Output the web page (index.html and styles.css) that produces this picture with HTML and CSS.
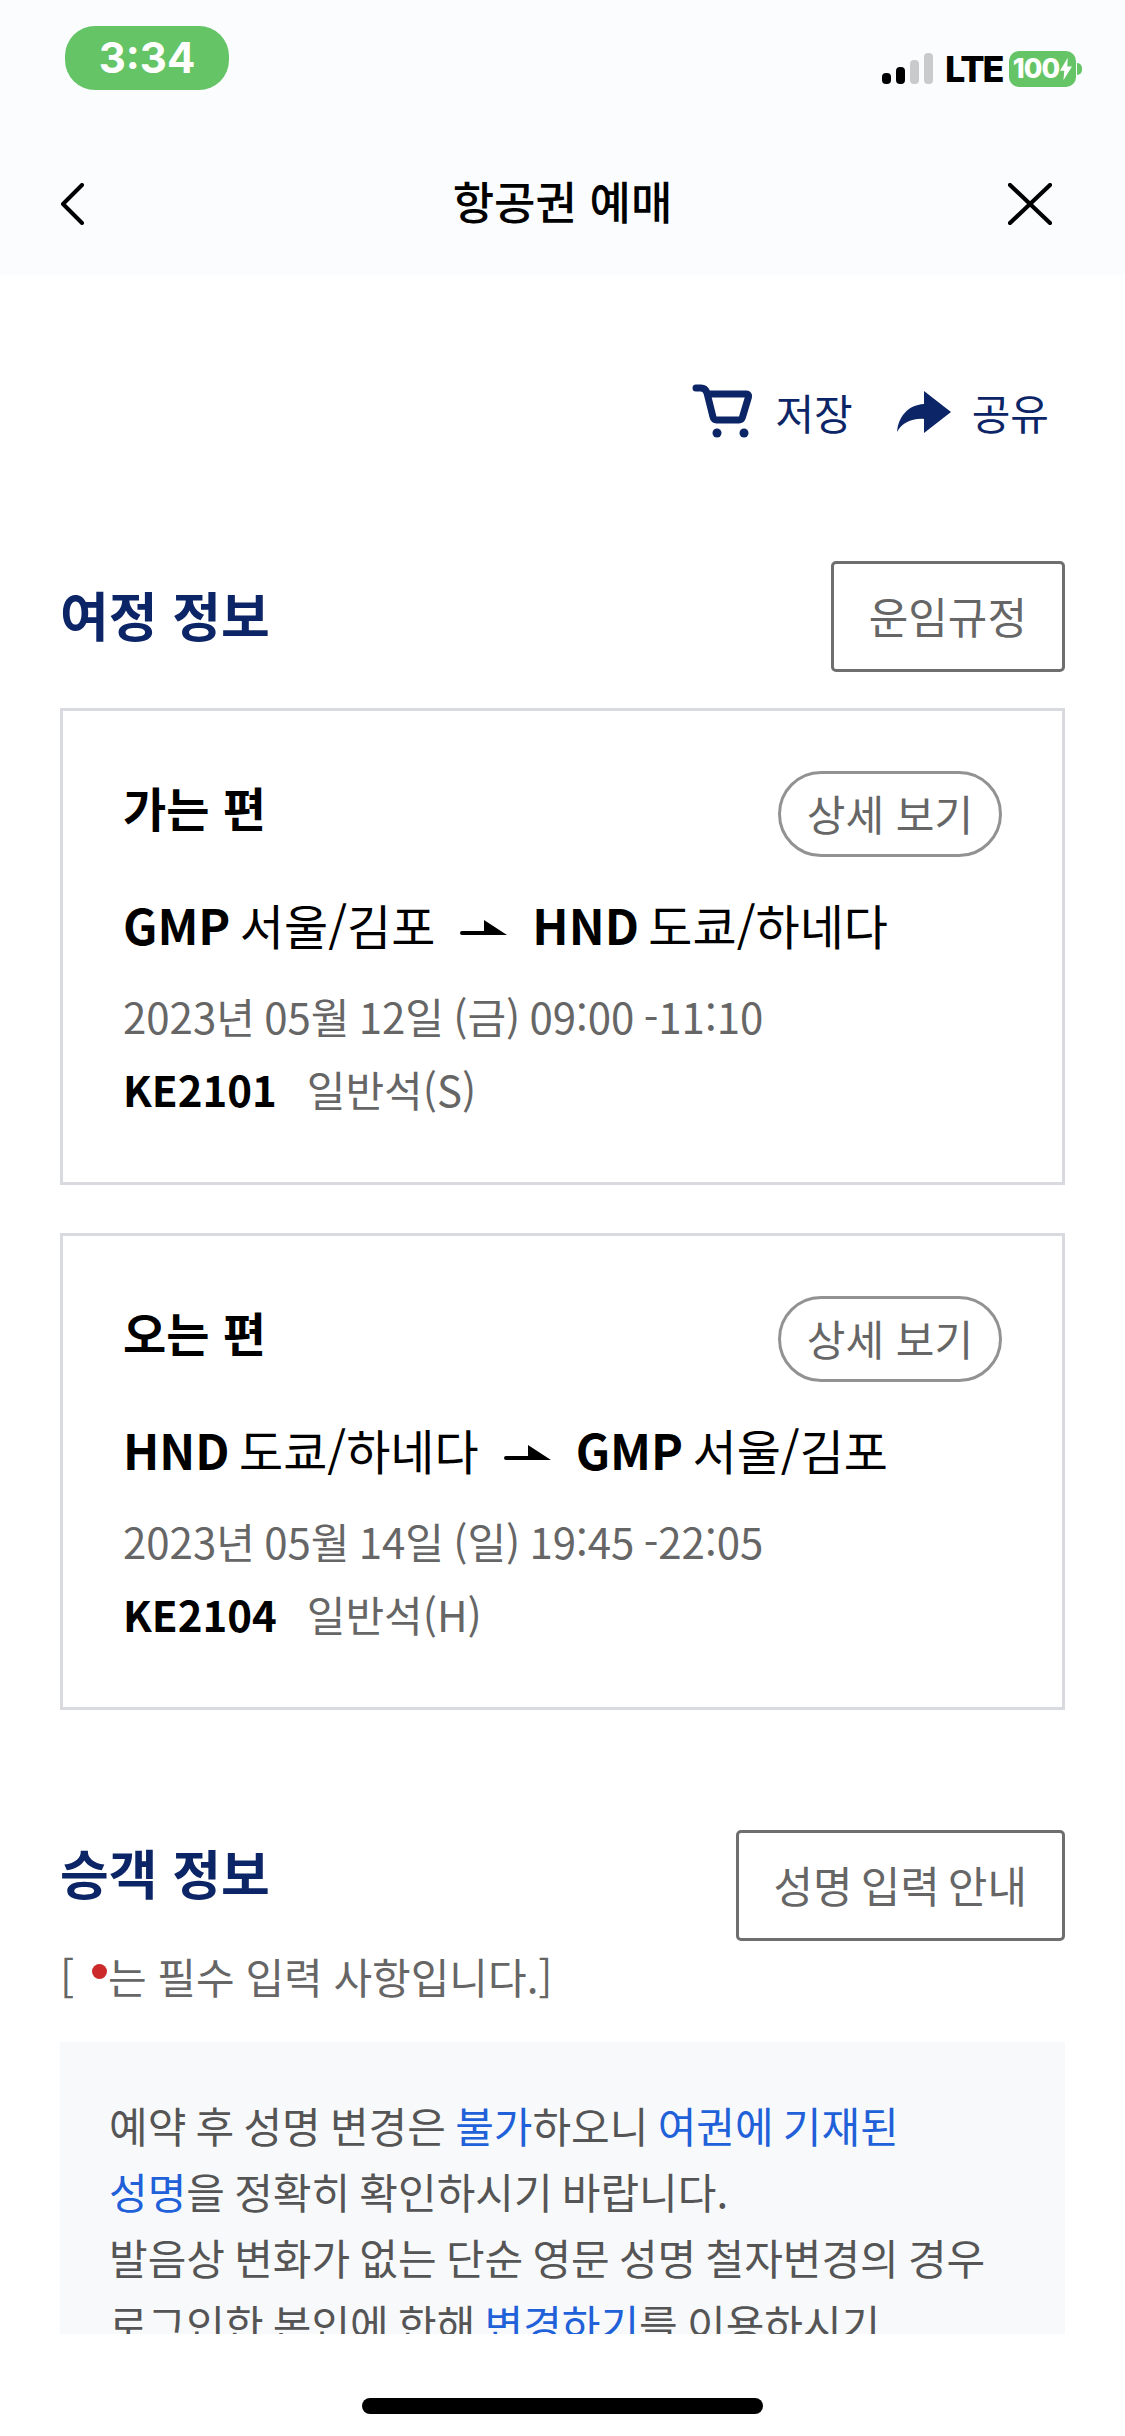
FILE: index.html
```html
<!DOCTYPE html>
<html lang="ko">
<head>
  <meta charset="utf-8">
  <meta name="viewport" content="width=device-width, initial-scale=1">
  <title>항공권 예매</title>
  <link rel="stylesheet" href="styles.css">
</head>
<body>
  <header class="top">
    <div class="status">
      <span class="time">3:34</span>
      <div class="indicators">
        <div class="signal">
          <i class="bar bar1"></i>
          <i class="bar bar2"></i>
          <i class="bar bar3 off"></i>
          <i class="bar bar4 off"></i>
        </div>
        <span class="lte">LTE</span>
        <div class="battery">
          <span class="level">100</span>
          <svg class="bolt" viewBox="0 0 14 26" width="12" height="24"><path d="M9 0 0 15h5l-1 11 10-16H8.500z" fill="#fff"/></svg>
        </div>
        <i class="battery-tip"></i>
      </div>
    </div>
    <nav class="nav">
      <svg class="nav-back" viewBox="0 0 26 42" width="26" height="42"><path d="M23 2 4 21l19 19" fill="none" stroke="#000" stroke-width="4" stroke-linecap="round" stroke-linejoin="round"/></svg>
      <h1>항공권 예매</h1>
      <svg class="nav-close" viewBox="0 0 44 42" width="44" height="42"><path d="M2 2l40 38M42 2 2 40" fill="none" stroke="#000" stroke-width="4.200" stroke-linecap="round"/></svg>
    </nav>
  </header>

  <main class="content">
    <div class="actions">
      <a class="action">
        <svg viewBox="0 0 62 56" width="62" height="56">
          <path d="M4 4h5c3 0 5 2 6 5l6 24c.5 2 1.500 3 3.500 3H47c2 0 3-1 3.500-3l6-20c.5-2-.5-3-2-3H16" fill="none" stroke="#0c2566" stroke-width="7" stroke-linecap="round" stroke-linejoin="round"/>
          <circle cx="25" cy="49" r="4.500" fill="#0c2566"/>
          <circle cx="52" cy="49" r="4.500" fill="#0c2566"/>
        </svg>
        저장
      </a>
      <a class="action">
        <svg viewBox="0 0 54 42" width="54" height="42"><path d="M27 0 54 21 27 42V28C15 27 5 32 0 41 1 27 10 14 27 13z" fill="#0c2566"/></svg>
        공유
      </a>
    </div>

    <section class="section">
      <div class="section-head">
        <h2>여정 정보</h2>
        <button class="btn" type="button">운임규정</button>
      </div>

      <article class="card">
        <div class="card-head">
          <h3>가는 편</h3>
          <button class="pill" type="button">상세 보기</button>
        </div>
        <p class="route">
          <span><b>GMP</b> 서울/김포</span>
          <svg class="arrow" viewBox="0 0 47 15" width="47" height="15"><path d="M24 0 47 15H2a2 2 0 0 1 0-4h22z" fill="#000"/></svg>
          <span><b>HND</b> 도쿄/하네다</span>
        </p>
        <p class="when">2023년 05월 12일 (금) 09:00 -11:10</p>
        <p class="flight"><b>KE2101</b><span>일반석(S)</span></p>
      </article>

      <article class="card">
        <div class="card-head">
          <h3>오는 편</h3>
          <button class="pill" type="button">상세 보기</button>
        </div>
        <p class="route">
          <span><b>HND</b> 도쿄/하네다</span>
          <svg class="arrow" viewBox="0 0 47 15" width="47" height="15"><path d="M24 0 47 15H2a2 2 0 0 1 0-4h22z" fill="#000"/></svg>
          <span><b>GMP</b> 서울/김포</span>
        </p>
        <p class="when">2023년 05월 14일 (일) 19:45 -22:05</p>
        <p class="flight"><b>KE2104</b><span>일반석(H)</span></p>
      </article>
    </section>

    <section class="section passenger">
      <div class="section-head">
        <h2>승객 정보</h2>
        <button class="btn" type="button">성명 입력 안내</button>
      </div>
      <p class="note">[ <i class="dot"></i>는 필수 입력 사항입니다.]</p>
      <div class="notice">
        예약 후 성명 변경은 <em>불가</em>하오니 <em>여권에 기재된</em><br>
        <em>성명</em>을 정확히 확인하시기 바랍니다.<br>
        발음상 변화가 없는 단순 영문 성명 철자변경의 경우<br>
        로그인한 본인에 한해 <em>변경하기</em>를 이용하시기
      </div>
    </section>
  </main>

  <footer class="home">
    <span class="home-bar"></span>
  </footer>
</body>
</html>
```

FILE: styles.css
```css
* {
  box-sizing: border-box;
}
html, body {
  margin: 0;
  background: #fff;
}
body {
  width: 1125px;
  height: 2436px;
  overflow: hidden;
  font-family: "Noto Sans CJK KR", "Noto Sans", sans-serif;
  color: #000;
}
h1, h2, h3, p {
  margin: 0;
}
button {
  font: inherit;
  background: #fff;
  color: #666;
  padding: 0 0 4px;
}

/* status bar + title */
.top {
  height: 275px;
  background: #fbfcfe;
}
.status {
  height: 100px;
  display: flex;
  justify-content: space-between;
  align-items: flex-start;
  padding: 26px 43px 0 65px;
}
.time {
  width: 164px;
  height: 64px;
  border-radius: 30px;
  background: #65c466;
  color: #fff;
  font: 700 42px/64px Inter, sans-serif;
  text-align: center;
}
.indicators {
  display: flex;
  align-items: flex-end;
  margin-top: 25px;
  height: 36px;
}
.signal {
  display: flex;
  align-items: flex-end;
  gap: 5px;
  margin-bottom: 3px;
}
.bar {
  display: block;
  width: 9px;
  border-radius: 4px;
  background: #000;
}
.bar.off {
  background: #c9cacc;
}
.bar1 { height: 11px; }
.bar2 { height: 17px; }
.bar3 { height: 24px; }
.bar4 { height: 31px; }
.lte {
  width: 54px;
  margin: 0 10px 0 12px;
  font: 800 36px/36px Inter, sans-serif;
  letter-spacing: -2px;
  white-space: nowrap;
}
.battery {
  width: 67px;
  height: 36px;
  border-radius: 10px;
  background: #65c466;
  display: flex;
  align-items: center;
  justify-content: center;
  gap: 1px;
  color: #fff;
}
.level {
  font: 800 27px/36px Inter, sans-serif;
  letter-spacing: -1px;
}
.battery-tip {
  width: 5px;
  height: 12px;
  margin: 0 0 12px 1px;
  background: #65c466;
  border-radius: 0 6px 6px 0;
}
.nav {
  height: 175px;
  padding: 32px 59px 0;
  display: grid;
  grid-template-columns: 1fr auto 1fr;
  align-items: center;
  align-content: start;
}
.nav h1 {
  font-size: 45px;
  font-weight: 500;
  line-height: 137px;
  padding-bottom: 6px;
}
.nav-close {
  justify-self: end;
  margin-right: 14px;
}

/* page */
.content {
  height: 2059px;
  overflow: hidden;
  padding: 109px 60px 0;
}
.actions {
  display: flex;
  justify-content: flex-end;
  gap: 44px;
  padding-right: 16px;
  height: 56px;
  align-items: center;
  font-size: 42px;
  color: #0c2566;
}
.action {
  display: flex;
  align-items: center;
  gap: 21px;
  line-height: 56px;
}
.section {
  margin-top: 121px;
}
.section-head {
  display: flex;
  justify-content: space-between;
  align-items: center;
  margin-bottom: 36px;
}
.section-head h2 {
  font-size: 53px;
  font-weight: 700;
  line-height: 72px;
  margin-bottom: 6px;
  color: #0c2566;
}
.btn {
  height: 111px;
  padding: 0 35px 4px;
  border: 3px solid #6f6f6f;
  border-radius: 5px;
  font-size: 43px;
  word-spacing: -4px;
}
.card {
  border: 3px solid #d9dae0;
  padding: 59px 60px 60px 60px;
  margin-bottom: 48px;
}
.card:last-child {
  margin-bottom: 0;
}
.card-head {
  display: flex;
  justify-content: space-between;
  align-items: flex-start;
}
.card-head h3 {
  font-size: 47px;
  font-weight: 700;
  line-height: 72px;
  margin-top: 1px;
}
.pill {
  width: 224px;
  height: 86px;
  margin-top: 1px;
  border: 3px solid #929292;
  border-radius: 43px;
  font-size: 42px;
}
.route {
  display: flex;
  align-items: center;
  margin-top: 32px;
  font-size: 48px;
  line-height: 70px;
  word-spacing: -4px;
}
.arrow {
  margin: 7px 25px 0 25px;
}
.when {
  margin-top: 24px;
  font-size: 42px;
  line-height: 66px;
  word-spacing: -2.500px;
  color: #666;
}
.flight {
  display: flex;
  gap: 30px;
  margin-top: 7px;
  font-size: 42px;
  line-height: 66px;
  color: #666;
}
.flight b {
  color: #000;
}

/* passenger */
.passenger {
  margin-top: 120px;
}
.passenger .section-head {
  margin-bottom: 0;
}
.passenger .section-head h2 {
  margin-bottom: 28px;
}
.note {
  margin-top: 2px;
  font-size: 42px;
  line-height: 66px;
  word-spacing: -1px;
  color: #666;
}
.dot {
  display: inline-block;
  width: 15px;
  height: 15px;
  margin: 0 1px 0 7px;
  border-radius: 50%;
  background: #cc2a2a;
  vertical-align: 15px;
}
.notice {
  margin-top: 33px;
  padding: 50px 20px 0 49px;
  height: 300px;
  background: #f8f9fb;
  font-size: 42px;
  line-height: 66px;
  word-spacing: -2.500px;
  color: #555;
  white-space: nowrap;
}
.notice em {
  font-style: normal;
  color: #2060d8;
}

.home {
  display: flex;
  justify-content: center;
  padding-top: 64px;
}
.home-bar {
  width: 401px;
  height: 16px;
  border-radius: 8px;
  background: #000;
}
```
